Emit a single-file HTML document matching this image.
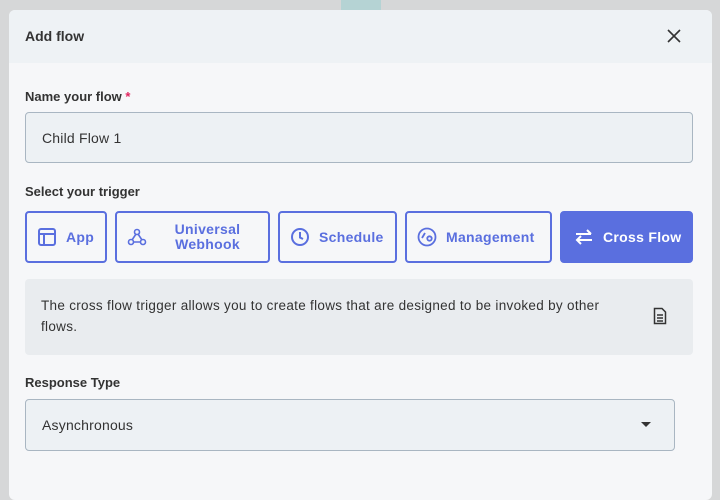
<!DOCTYPE html>
<html><head><style>
*{box-sizing:border-box;margin:0;padding:0}
body{width:720px;height:493px;background:#d6d7d8;font-family:"Liberation Sans",sans-serif;position:relative;overflow:hidden}
.blob{position:absolute;left:341px;top:0;width:40px;height:10px;background:#b5d3d4}
.modal{position:absolute;left:9px;top:10px;width:703px;height:490px;background:#f6f7f9;border-radius:6px;overflow:hidden}
.hdr{height:53px;background:#eef2f5;position:relative}
.hdr h1{position:absolute;left:16px;top:18px;font-size:14px;font-weight:bold;color:#333}
.x{position:absolute;left:657px;top:18px}
.lbl{position:absolute;font-size:13px;font-weight:bold;color:#333}
.inp{position:absolute;background:#edf1f4;border:1px solid #a9b6c2;border-radius:4px;font-size:14px;color:#333;padding-left:16px;display:flex;align-items:center;letter-spacing:0.2px}
.btn{position:absolute;top:201px;height:52px;border:2px solid #5a6fdf;border-radius:4px;color:#5a6fdf;font-weight:bold;font-size:14px;display:flex;align-items:center;padding-left:10px;gap:9px;letter-spacing:0.3px}
.btn svg{flex:none}
.info{position:absolute;left:16px;top:269px;width:668px;height:76px;background:#e9ecef;border-radius:4px;font-size:13.5px;color:#333;line-height:21px;padding:16px 70px 0 16px;letter-spacing:0.3px}
</style></head><body>
<div class="blob"></div>
<div class="modal">
<div class="hdr"><h1>Add flow</h1>
<svg class="x" width="16" height="16" viewBox="0 0 16 16"><path d="M2 2L14 14M14 2L2 14" stroke="#333" stroke-width="1.6"/></svg></div>
<div class="lbl" style="left:16px;top:79px">Name your flow <span style="color:#e0245e">*</span></div>
<div class="inp" style="left:16px;top:102px;width:668px;height:51px">Child Flow 1</div>
<div class="lbl" style="left:16px;top:174px">Select your trigger</div>
<div class="btn" style="left:16px;width:82px"><svg width="20" height="20" viewBox="0 0 20 20" fill="none" stroke="#5a6fdf" stroke-width="2"><rect x="2" y="2" width="16" height="16" rx="2"/><path d="M2 7H18M7 7V18"/></svg>App</div>
<div class="btn" style="left:106px;width:155px;gap:0"><svg width="20" height="20" viewBox="0 0 20 20" fill="none" stroke="#5a6fdf" stroke-width="1.6"><circle cx="10" cy="5" r="2.5"/><circle cx="4" cy="15" r="2.5"/><circle cx="16" cy="15" r="2.5"/><path d="M9 7L5 13M11 7L15 13M6.5 15H13.5"/></svg><span style="text-align:center;flex:1;line-height:15px">Universal<br>Webhook</span></div>
<div class="btn" style="left:269px;width:119px"><svg width="20" height="20" viewBox="0 0 20 20" fill="none" stroke="#5a6fdf" stroke-width="2"><circle cx="10" cy="10" r="8"/><path d="M10 5V10.5L13 12"/></svg>Schedule</div>
<div class="btn" style="left:396px;width:147px"><svg width="20" height="20" viewBox="0 0 20 20" fill="none" stroke="#5a6fdf" stroke-width="1.8"><circle cx="10" cy="10" r="8.5"/><circle cx="12.5" cy="11.5" r="2.2"/><path d="M5 11L8 6"/></svg>Management</div>
<div class="btn" style="left:551px;width:133px;background:#5a6fdf;border-color:#5a6fdf;color:#fff;padding-left:12px"><svg width="20" height="20" viewBox="0 0 20 20" fill="none" stroke="#fff" stroke-width="2"><path d="M2 7H17M13 3L17 7M18 13H3M7 9L3 13L7 17"/></svg>Cross Flow</div>
<div class="info">The cross flow trigger allows you to create flows that are designed to be invoked by other flows.
<svg style="position:absolute;left:628px;top:28px" width="14" height="18" viewBox="0 0 14 18" fill="none" stroke="#333" stroke-width="1.5"><path d="M1.5 1.5H9L12.5 5V16.5H1.5Z"/><path d="M4 8H10M4 11H10M4 14H10"/></svg></div>
<div class="lbl" style="left:16px;top:365px">Response Type</div>
<div class="inp" style="left:16px;top:389px;width:650px;height:52px">Asynchronous
<svg style="position:absolute;left:615px;top:22px" width="10" height="6"><path d="M0 0H10L5 5Z" fill="#333"/></svg></div>
</div>
</body></html>
